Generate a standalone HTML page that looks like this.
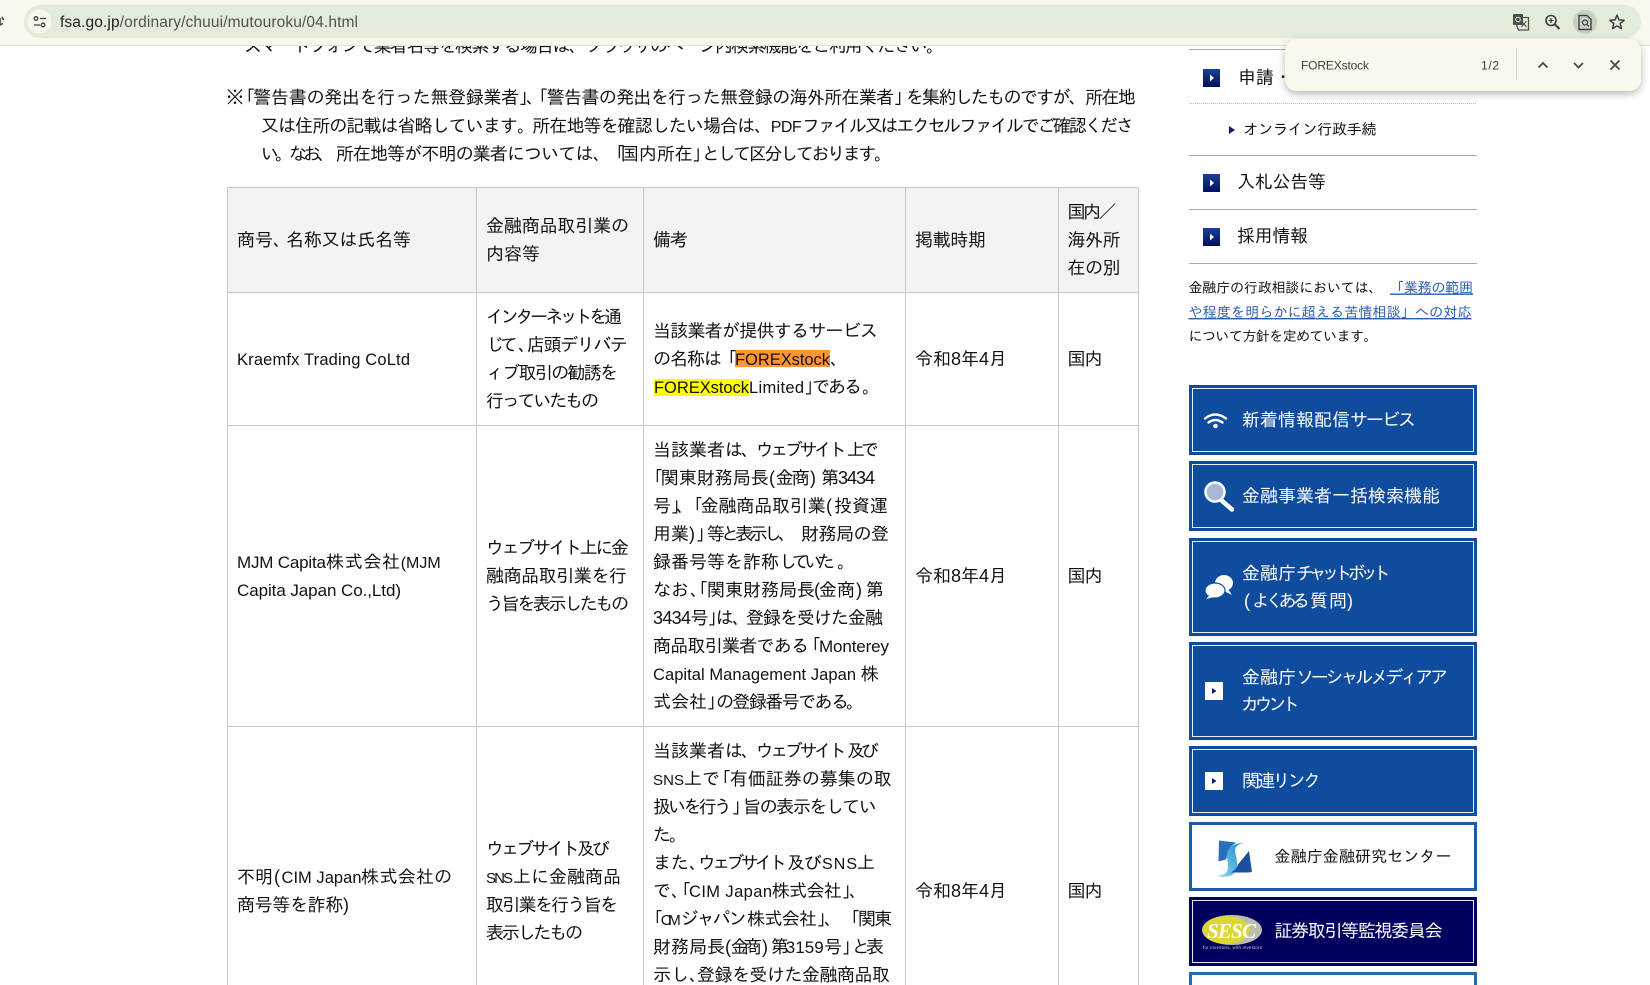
<!DOCTYPE html>
<html lang="ja"><head><meta charset="utf-8"><title>fsa.go.jp</title>
<style>
html,body{margin:0;padding:0;width:1650px;height:985px;overflow:hidden;background:#fff}
svg{display:block;position:absolute;left:0;top:0}
text{font-family:"Liberation Sans","IPAGothic","Noto Sans CJK JP",sans-serif;fill:#111}
.m text{font-size:18px}
.m text.a{font-size:16.5px}
.s{font-size:14px;fill:#111}
.l{font-size:14px;fill:#2a5db0;text-decoration:underline}
.w{font-size:18px;fill:#fff}
.u{font-family:"Liberation Sans",sans-serif;font-size:15.5px;fill:#4f544e}
.f{font-family:"Liberation Sans",sans-serif;font-size:12px;fill:#3c4043}
</style></head><body>
<svg width="1650" height="985" viewBox="0 0 1650 985" xmlns="http://www.w3.org/2000/svg">
<defs>
<linearGradient id="g" x1="0" y1="0" x2="0" y2="1"><stop offset="0" stop-color="#1a3f9c"/><stop offset="1" stop-color="#000f5c"/></linearGradient>
<linearGradient id="sw" x1="0" y1="1" x2="1" y2="0"><stop offset="0" stop-color="#8fd4ef"/><stop offset="1" stop-color="#1a8fd0"/></linearGradient>
<filter id="sh" x="-10%" y="-30%" width="120%" height="170%"><feDropShadow dx="0" dy="3" stdDeviation="4" flood-color="#000" flood-opacity=".28"/></filter>
</defs>

<!-- table frame -->
<rect x="227.5" y="187.5" width="911" height="105" fill="#f3f3f3"/>
<g stroke="#c8c8c8" stroke-width="1" fill="none">
<path d="M227.5 187.5H1138.500M227.5 292.5H1138.500M227.5 425.5H1138.500M227.5 726.5H1138.500"/>
<path d="M227.5 187.5V985M476.5 187.5V985M643.5 187.5V985M905.5 187.5V985M1058.5 187.5V985M1138.5 187.5V985"/>
</g>
<rect x="735" y="350" width="95" height="17" fill="#ff9632"/>
<rect x="654" y="379" width="95" height="17" fill="#ffff00"/>

<g class="m" transform="translate(-1,0)">
<text x="245" y="52" textLength="700">スマートフォンで業者名等を検索する場合は、ブラウザのページ内検索機能をご利用ください。</text>

<!-- paragraph -->
<g transform="translate(0,-1)">
<text x="227" y="104.5">※</text><text x="238" y="104.5">「</text>
<text x="254.3" y="104.5" textLength="266">警告書の発出を行った無登録業者</text>
<text x="520" y="104.5">」</text><text x="527" y="104.5">、</text><text x="531" y="104.5">「</text>
<text x="547.7" y="104.5" textLength="347.500">警告書の発出を行った無登録の海外所在業者</text>
<text x="895" y="104.5">」</text>
<text x="906.7" y="104.5" textLength="230">を集約したものですが、所在地</text>

<text x="262" y="133" textLength="274">又は住所の記載は省略しています。</text>
<text x="533.3" y="133" textLength="240">所在地等を確認したい場合は、</text>
<text x="771.7" y="133" textLength="31" style="font-size:16px">PDF</text>
<text x="803" y="133" textLength="332">ファイル又はエクセルファイルでご確認くださ</text>

<text x="262" y="161" textLength="74">い。なお、</text>
<text x="336.7" y="161" textLength="275">所在地等が不明の業者については、</text>
<text x="608" y="161">「</text>
<text x="621.7" y="161">国内所在</text>
<text x="693.500" y="161">」</text>
<text x="703" y="161" textLength="190">として区分しております。</text>
</g>

<!-- header -->
<text x="238" y="246">商号</text><text x="274" y="246">、</text><text x="287" y="246" textLength="125">名称又は氏名等</text>
<text x="487" y="232" textLength="143">金融商品取引業の</text>
<text x="487" y="260" textLength="54">内容等</text>
<text x="654" y="246" textLength="35">備考</text>
<text x="916" y="246" textLength="71">掲載時期</text>
<text x="1068.500" y="218" textLength="49">国内／</text>
<text x="1068.500" y="246" textLength="53">海外所</text>
<text x="1068.500" y="274" textLength="53">在の別</text>

<!-- row 1 -->
<text class="a" x="238" y="365" textLength="173">Kraemfx Trading CoLtd</text>
<text x="487" y="323" textLength="136">インターネットを通</text>
<text x="487" y="351" textLength="32">じて</text><text x="519" y="351">、</text><text x="528" y="351" textLength="101">店頭デリバテ</text>
<text x="487" y="379" textLength="132">ィブ取引の勧誘を</text>
<text x="487" y="407" textLength="113">行っていたもの</text>
<text x="654" y="337" textLength="225">当該業者が提供するサービス</text>
<text x="654" y="365" textLength="69">の名称は</text><text x="720" y="365">「</text>
<text class="a" x="736" y="365" textLength="95">FOREXstock</text><text x="831" y="365">、</text>
<text class="a" x="655" y="393" textLength="95">FOREXstock</text>
<text class="a" x="750" y="393" textLength="55">Limited</text><text x="805.500" y="393">」</text>
<text x="813" y="393" textLength="50">である</text><text x="863" y="393">。</text>
<text x="916" y="365" textLength="92">令和8年4月</text>
<text x="1068.500" y="365" textLength="35">国内</text>

<!-- row 2 -->
<text x="238" y="568" textLength="89" style="font-size:17px">MJM Capita</text>
<text x="327" y="568" textLength="74">株式会社</text>
<text x="401.700" y="568" textLength="40" style="font-size:16px">(MJM</text>
<text x="238" y="596" textLength="164" style="font-size:17px">Capita Japan Co.,Ltd)</text>
<text x="487" y="554" textLength="143">ウェブサイト上に金</text>
<text x="487" y="582" textLength="141">融商品取引業を行</text>
<text x="487" y="610" textLength="143">う旨を表示したもの</text>

<text x="654" y="456">当該業者は</text><text x="742" y="456">、</text>
<text x="756.700" y="456" textLength="91">ウェブサイト</text><text x="848" y="456" textLength="32">上で</text>

<text x="646" y="484">「</text><text x="661.700" y="484">関東財務局長</text>
<text x="770" y="484">(</text><text x="776.700" y="484" textLength="34">金商</text><text x="811" y="484">)</text>
<text x="822" y="484" textLength="17">第</text><text x="839" y="484" textLength="37">3434</text>

<text x="654" y="512">号</text><text x="672" y="512">」</text><text x="677" y="512">、</text><text x="686" y="512">「</text>
<text x="701.700" y="512" textLength="125">金融商品取引業</text><text x="827" y="512">(</text><text x="835" y="512">投資運</text>

<text x="654" y="540">用業</text><text x="690" y="540">)</text><text x="697" y="540">」</text>
<text x="708" y="540" textLength="89">等と表示し、</text><text x="802" y="540" textLength="88">財務局の登</text>

<text x="654" y="568">録番号等を詐称</text><text x="780" y="568" textLength="56">していた</text><text x="838" y="568">。</text>

<text x="654" y="596">なお</text><text x="691" y="596">、</text><text x="691" y="596">「</text>
<text x="708" y="596">関東財務局長</text><text x="815" y="596">(</text>
<text x="820" y="596" textLength="36">金商</text><text x="857" y="596">)</text><text x="866.700" y="596" textLength="17">第</text>

<text x="654" y="624" textLength="38">3434</text><text x="691.500" y="624">号</text><text x="709" y="624">」</text>
<text x="716.700" y="624" textLength="16">は</text><text x="733" y="624">、</text>
<text x="747" y="624" textLength="137">登録を受けた金融</text>

<text x="654" y="652" textLength="156">商品取引業者である</text><text x="804" y="652">「</text>
<text x="820" y="652" textLength="70" style="font-size:17px">Monterey</text>

<text class="a" x="654" y="680" textLength="203">Capital Management Japan</text><text x="861.700" y="680">株</text>

<text x="654" y="708">式会社</text><text x="708" y="708">」</text>
<text x="717" y="708" textLength="133">の登録番号である</text><text x="847" y="708">。</text>
<text x="916" y="582" textLength="92">令和8年4月</text>
<text x="1068.500" y="582" textLength="35">国内</text>

<!-- row 3 -->
<text x="238" y="883">不明</text><text x="275" y="883">(</text>
<text class="a" x="282.500" y="883" textLength="80">CIM Japan</text>
<text x="362" y="883" textLength="73">株式会社</text><text x="435" y="883" textLength="16">の</text>
<text x="238" y="911" textLength="112">商号等を詐称)</text>
<text x="487" y="855" textLength="124">ウェブサイト及び</text>
<text x="487" y="883" textLength="27" style="font-size:15px">SNS</text><text x="514" y="883">上に金融商品</text>
<text x="487" y="911" textLength="132">取引業を行う旨を</text>
<text x="487" y="939" textLength="97">表示したもの</text>

<text x="654" y="757">当該業者は</text><text x="742" y="757">、</text>
<text x="756.700" y="757" textLength="91">ウェブサイト</text><text x="848" y="757" textLength="32">及び</text>

<text x="654" y="785" textLength="31" style="font-size:15px">SNS</text><text x="685" y="785" textLength="36">上で</text>
<text x="714" y="785">「</text><text x="730.700" y="785">有価証券の募集の取</text>

<text x="654" y="813" textLength="79">扱いを行う</text><text x="733" y="813">」</text>
<text x="744" y="813" textLength="134">旨の表示をしてい</text>

<text x="654" y="841">た</text><text x="670" y="841">。</text>

<text x="654" y="869">また</text><text x="690" y="869">、</text>
<text x="699" y="869" textLength="89">ウェブサイト</text><text x="788" y="869" textLength="35">及び</text>
<text x="823" y="869" textLength="35" style="font-size:16px">SNS</text><text x="858" y="869">上</text>

<text x="654" y="897">で</text><text x="672" y="897">、</text><text x="674" y="897">「</text>
<text class="a" x="690" y="897" textLength="83">CIM Japan</text>
<text x="772.700" y="897" textLength="70">株式会社</text><text x="843" y="897">」</text><text x="850" y="897">、</text>

<text x="646" y="925">「</text><text class="a" x="661.700" y="925" textLength="20" style="font-size:15px">CIM</text>
<text x="681.700" y="925" textLength="66">ジャパン</text><text x="748" y="925" textLength="70">株式会社</text>
<text x="818" y="925">」</text><text x="825" y="925">、</text><text x="843" y="925">「</text><text x="859" y="925" textLength="34">関東</text>

<text x="654" y="953">財務局長</text><text x="726" y="953">(</text><text x="731.700" y="953" textLength="31">金商</text><text x="763" y="953">)</text>
<text x="771.700" y="953" textLength="15">第</text><text x="786.700" y="953" textLength="38" style="font-size:17px">3159</text>
<text x="825" y="953">号</text><text x="843" y="953">」</text><text x="853" y="953" textLength="14">と</text><text x="867" y="953" textLength="17">表</text>

<text x="654" y="981">示し</text><text x="690" y="981">、</text>
<text x="698" y="981" textLength="193">登録を受けた金融商品取</text>
<text x="916" y="897" textLength="92">令和8年4月</text>
<text x="1068.500" y="897" textLength="35">国内</text>
</g>

<!-- side nav -->
<g class="m">
<path d="M1189 49.500H1477M1189 155.500H1477M1189 209.500H1477M1189 263.500H1477" stroke="#aaa" fill="none"/>
<path d="M1189 103.500H1477" stroke="#bbb" stroke-dasharray="1 1" fill="none"/>
<rect x="1203" y="69" width="17" height="18" fill="url(#g)"/><path d="M1210 74.500l4 3.500-4 3.500z" fill="#fff"/>
<rect x="1203" y="174" width="17" height="18" fill="url(#g)"/><path d="M1210 179.500l4 3.500-4 3.500z" fill="#fff"/>
<rect x="1203" y="228" width="17" height="18" fill="url(#g)"/><path d="M1210 233.500l4 3.500-4 3.500z" fill="#fff"/>
<text x="1238" y="83.500">申請・届出等</text>
<text x="1237" y="188" textLength="89">入札公告等</text>
<text x="1237" y="242" textLength="71">採用情報</text>
<path d="M1229 126l6 4-6 4z" fill="#0a1a70"/>
<text x="1243.500" y="134.500" style="font-size:15px" textLength="133">オンライン行政手続</text>
</g>

<text class="s" x="1188.500" y="292.500" textLength="194">金融庁の行政相談においては、</text>
<text class="l" x="1390" y="292.500" textLength="83">「業務の範囲</text>
<text class="l" x="1188.500" y="317" textLength="283">や程度を明らかに超える苦情相談」への対応</text>
<text class="s" x="1188.500" y="341" textLength="189">について方針を定めています。</text>

<!-- buttons -->
<g fill="#0f4c9e">
<rect x="1189" y="385" width="288" height="70"/>
<rect x="1189" y="461" width="288" height="70"/>
<rect x="1189" y="538" width="288" height="98"/>
<rect x="1189" y="642" width="288" height="98"/>
<rect x="1189" y="746" width="288" height="70"/>
</g>
<g fill="none" stroke="#e8eef8" stroke-width="1">
<rect x="1192.500" y="388.500" width="281" height="63"/>
<rect x="1192.500" y="464.500" width="281" height="63"/>
<rect x="1192.500" y="541.500" width="281" height="91"/>
<rect x="1192.500" y="645.500" width="281" height="91"/>
<rect x="1192.500" y="749.500" width="281" height="63"/>
</g>
<text class="w" x="1242" y="426">新着情報配信</text><text class="w" x="1350" y="426" textLength="66">サービス</text>
<text class="w" x="1242" y="502" textLength="198">金融事業者一括検索機能</text>
<text class="w" x="1242" y="579.500">金融庁</text><text class="w" x="1296" y="579.500" textLength="95">チャットボット</text>
<text class="w" x="1244" y="607">(</text><text class="w" x="1252" y="607" textLength="58">よくある</text><text class="w" x="1310" y="607" textLength="37">質問</text><text class="w" x="1347" y="607">)</text>
<text class="w" x="1242" y="683.500">金融庁</text><text class="w" x="1296" y="683.500" textLength="152">ソーシャルメディアア</text>
<text class="w" x="1241" y="710.500" textLength="59">カウント</text>
<text class="w" x="1242" y="787" textLength="79">関連リンク</text>

<!-- wifi -->
<g fill="none" stroke="#fff" stroke-width="2.400" stroke-linecap="round">
<path d="M1205 418.500q10-8 21 0"/><path d="M1208.500 422.500q7-5 14 0"/>
</g>
<circle cx="1215.500" cy="426" r="2.300" fill="#fff"/>
<!-- magnifier -->
<path d="M1221 500l11 9.500" stroke="#fff" stroke-width="4.500" stroke-linecap="round"/>
<circle cx="1215" cy="492" r="9.500" fill="#a9b8d8" stroke="#fff" stroke-width="2.500"/>
<!-- chat -->
<ellipse cx="1224" cy="583" rx="9" ry="8" fill="#fff"/><path d="M1228 589l4 6-8-4z" fill="#fff"/>
<ellipse cx="1215" cy="590.500" rx="10" ry="7.500" fill="#fff" stroke="#0f4c9e" stroke-width="1.200"/><path d="M1210 595l-4 4 8-2z" fill="#fff"/>
<!-- white squares -->
<rect x="1205" y="682" width="18" height="18" fill="#fff"/><path d="M1212 688l4.500 3-4.500 3z" fill="#0a1a70"/>
<rect x="1205" y="772" width="18" height="18" fill="#fff"/><path d="M1212 778l4.500 3-4.500 3z" fill="#0a1a70"/>

<!-- research centre -->
<rect x="1190.500" y="823.500" width="285" height="66" fill="#fff" stroke="#1d5aa5" stroke-width="3"/>
<path d="M1219 840.500l17 2-6 5-4 12-7.500 2z" fill="#2a6fbc"/>
<path d="M1243 843c-8 2-9 6-7 13 2 9 2 15-4 19-4 2-8 2-15 1 9-1 11-4 11-10 0-7-3-12 1-17 3-4 8-6 14-6z" fill="url(#sw)"/>
<path d="M1249 851l3 21-4 0.500h-17c5-3 6-5 7-8z" fill="#1c4f9e"/>
<text x="1274.500" y="862" style="font-size:16px;fill:#111" textLength="177">金融庁金融研究センター</text>

<!-- SESC -->
<rect x="1189" y="897" width="288" height="69" fill="#00005f"/>
<rect x="1192.500" y="900.500" width="281" height="62" fill="none" stroke="#e8e8f0"/>
<ellipse cx="1232" cy="930" rx="30" ry="15" fill="#bdbdae"/>
<ellipse cx="1226" cy="930" rx="23.500" ry="14" fill="#dcd735"/>
<text x="1207" y="938" style="font-family:'Liberation Serif',serif;font-weight:bold;font-style:italic;font-size:21px;fill:#fff" textLength="49">SESC</text>
<text x="1203" y="949" style="font-size:4.500px;fill:#ccc" textLength="59">for investors, with investors</text>
<text class="w" x="1274.500" y="937" textLength="168">証券取引等監視委員会</text>

<!-- next button -->
<rect x="1190.500" y="973.500" width="285" height="30" fill="#fff" stroke="#2a6aa5" stroke-width="3"/>

<!-- chrome toolbar -->
<rect x="0" y="0" width="1650" height="45" fill="#f8f9ec"/>
<rect x="0" y="45" width="1650" height="1" fill="#e2e4d8"/>
<rect x="24" y="5" width="1617" height="33" rx="16.500" fill="#e3ebda"/>
<circle cx="39.500" cy="21.500" r="12" fill="#f6f8ee"/>
<g fill="none" stroke="#3c4043" stroke-width="1.300">
<circle cx="36" cy="18.500" r="1.800"/><path d="M40 18.500h6M34 25h6"/><circle cx="43" cy="25" r="1.800"/>
<path d="M0 18v7l3-1.500M3.500 20l-1.500-3" stroke-width="1.500"/>
</g>
<text class="u" x="60" y="27" textLength="298"><tspan style="fill:#202124">fsa.go.jp</tspan>/ordinary/chuui/mutouroku/04.html</text>

<!-- translate -->
<rect x="1513" y="14" width="10" height="11" rx="1" fill="#4a4f4a"/>
<path d="M1523 17.500h5.500v12.500h-10l-2-5" fill="none" stroke="#4a4f4a" stroke-width="1.300"/>
<circle cx="1518" cy="19.500" r="2.300" fill="none" stroke="#e3ebda" stroke-width="1"/>
<path d="M1521.500 21l5 6M1526.500 21l-5 6" stroke="#4a4f4a" stroke-width="1"/>
<!-- zoom -->
<circle cx="1551" cy="20.500" r="5" fill="none" stroke="#3c4043" stroke-width="1.600"/>
<path d="M1555 24.500l4.500 4.500" stroke="#3c4043" stroke-width="2"/>
<path d="M1548.500 20.500h5M1551 18v5" stroke="#3c4043" stroke-width="1.300"/>
<!-- find -->
<circle cx="1585" cy="22" r="12" fill="#c8d0c4"/>
<path d="M1579 15.500h8l4 4v10h-12z" fill="none" stroke="#3c4043" stroke-width="1.400"/>
<circle cx="1585" cy="22.500" r="2.500" fill="none" stroke="#3c4043" stroke-width="1.200"/>
<path d="M1587 24.500l2 2" stroke="#3c4043" stroke-width="1.200"/>
<!-- star -->
<path d="M1617 15.200l2 4.700 5.100.4-3.900 3.300 1.200 5-4.400-2.700-4.400 2.700 1.200-5-3.900-3.300 5.100-.4z" fill="none" stroke="#3c4043" stroke-width="1.500" stroke-linejoin="round"/>

<!-- find bar -->
<rect x="1285" y="39" width="356" height="52" rx="12" fill="#f8f9ec" filter="url(#sh)"/>
<text class="f" x="1301" y="69.500" textLength="68">FOREXstock</text>
<text class="f" x="1481" y="69.500" textLength="18">1/2</text>
<rect x="1516" y="48" width="1" height="32" fill="#d6d8cc"/>
<g fill="none" stroke="#45494a" stroke-width="1.800">
<path d="M1538.500 67.500l4.500-4.500 4.500 4.500"/>
<path d="M1574 63l4.500 4.500 4.500-4.500"/>
<path d="M1610.500 60.500l9 9M1619.500 60.500l-9 9"/>
</g>
</svg>
</body></html>
